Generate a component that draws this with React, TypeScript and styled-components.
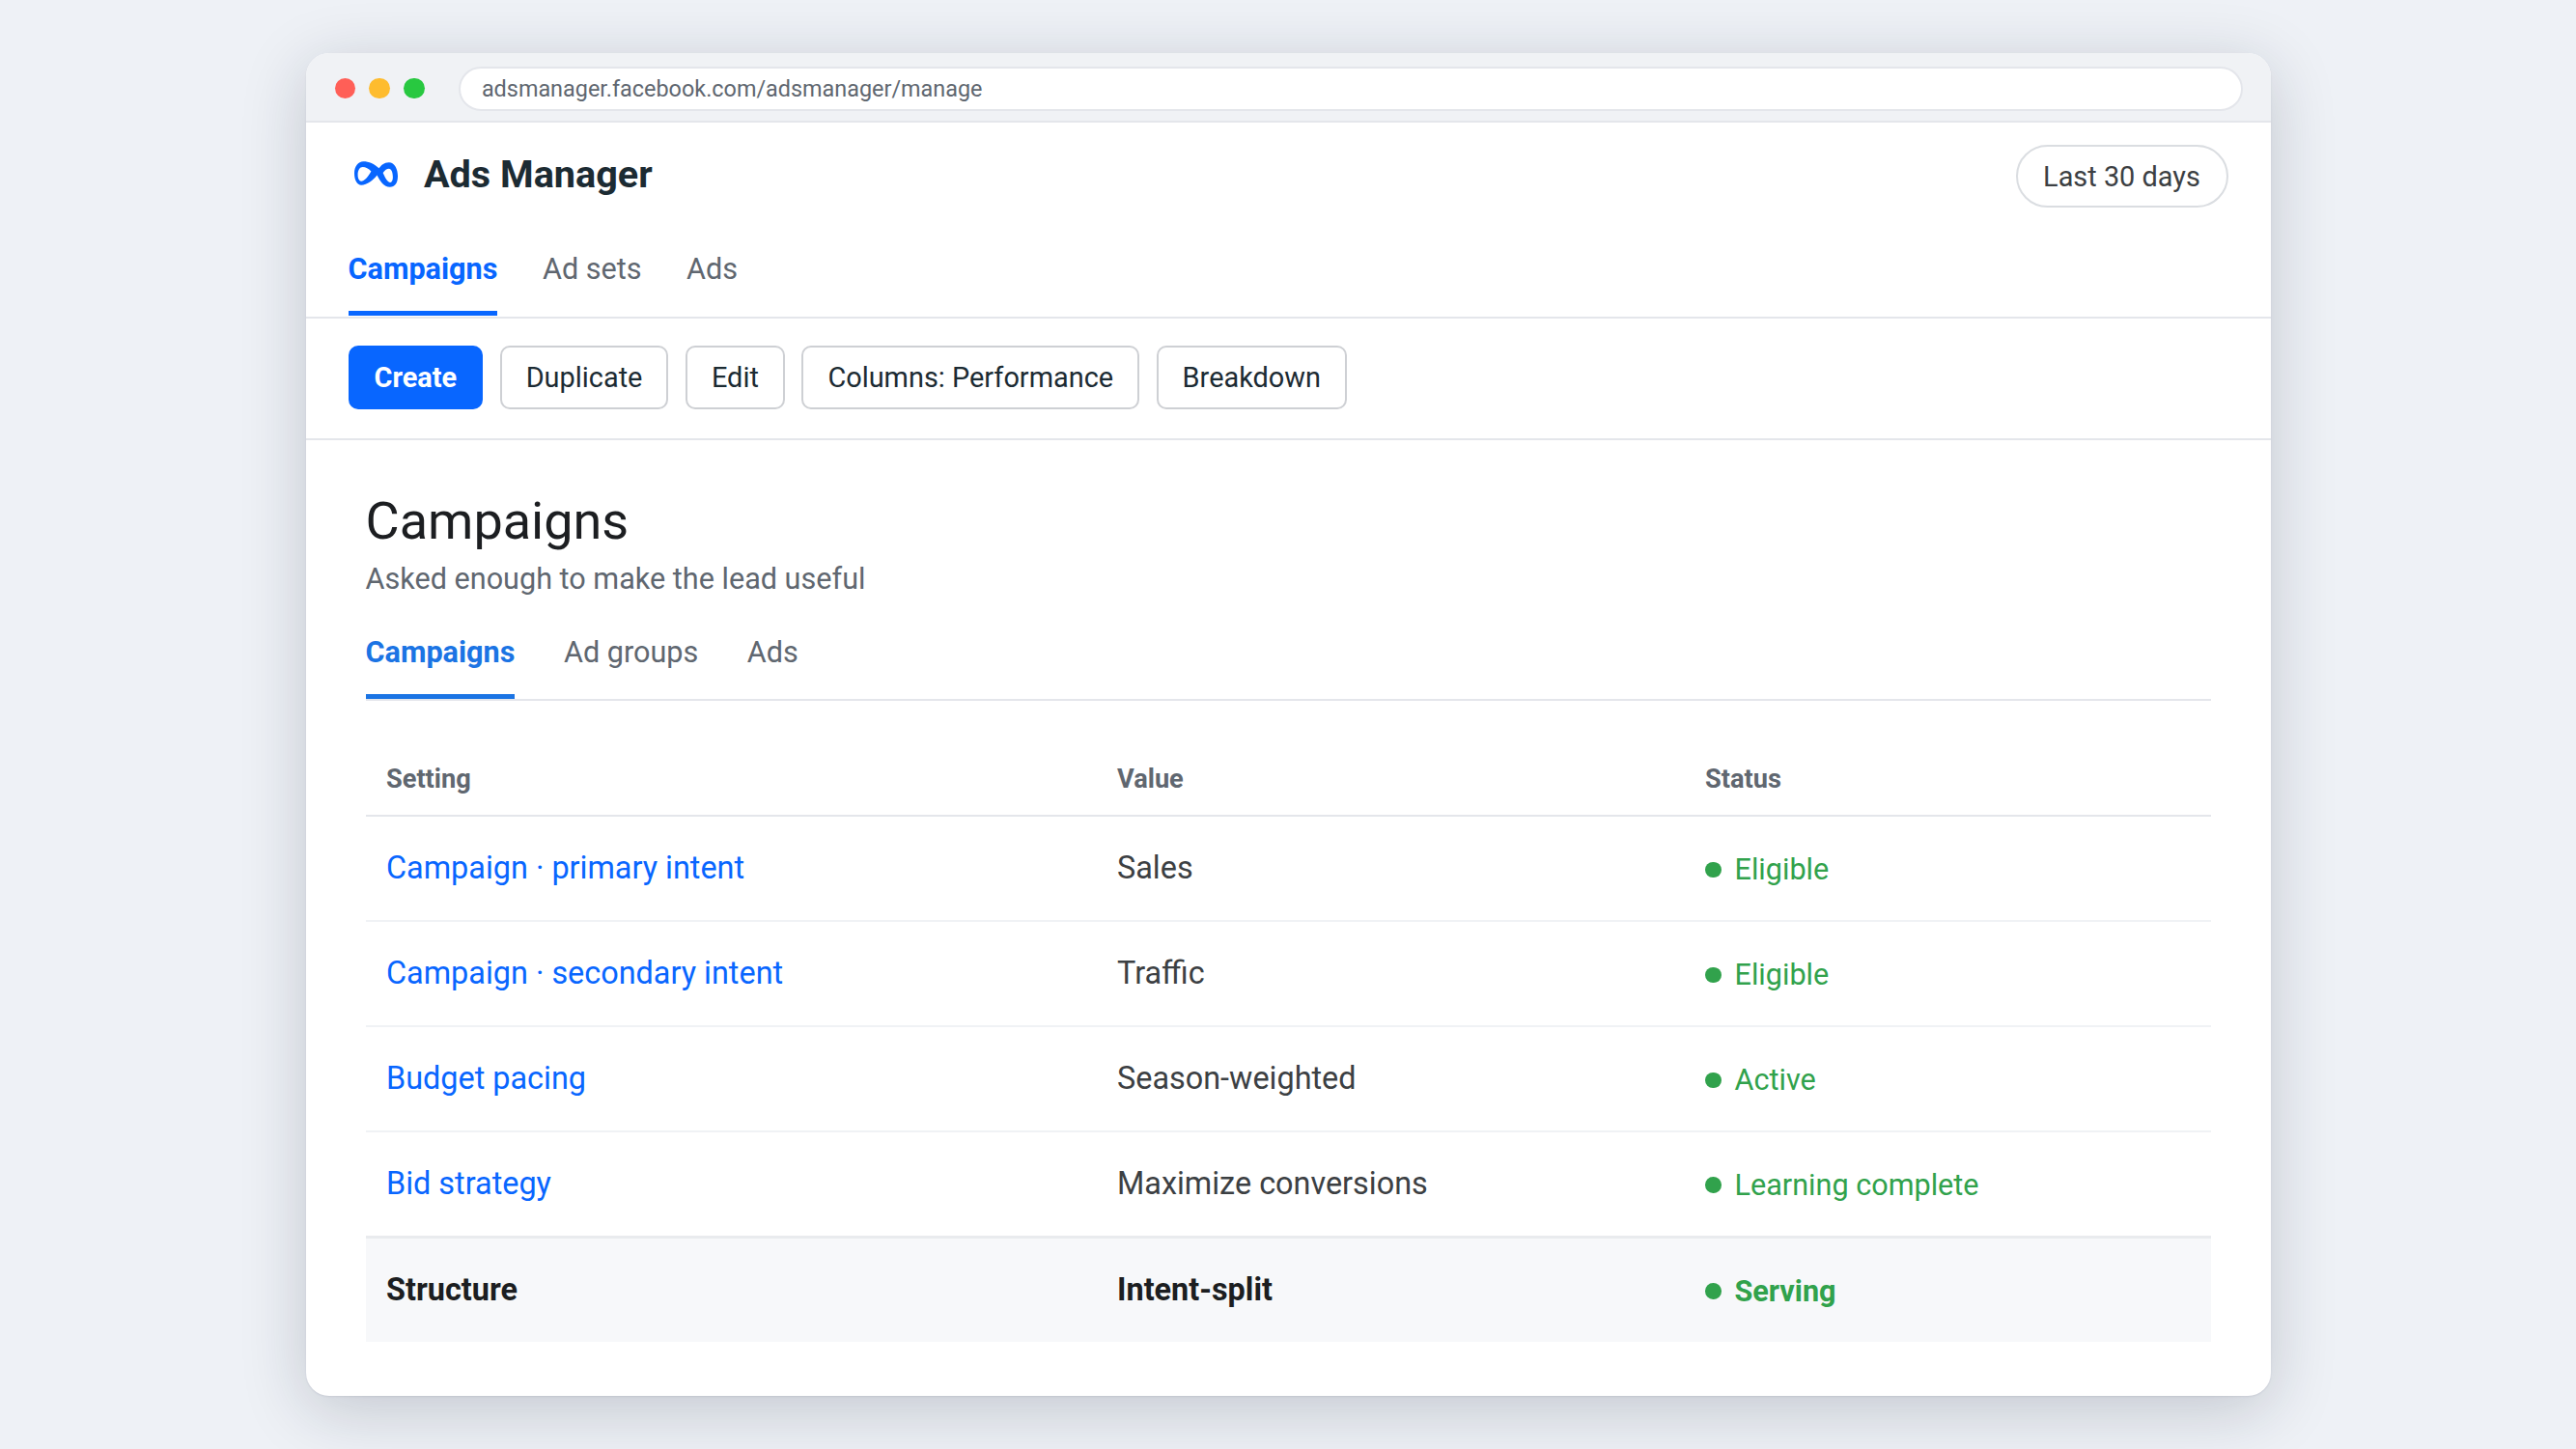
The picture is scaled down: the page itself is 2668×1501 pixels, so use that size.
import React from 'react';
import styled, { createGlobalStyle } from 'styled-components';

const GlobalStyle = createGlobalStyle`
	html, body {
		margin: 0;
		padding: 0;
		background: #eef1f6;
		font-family: Roboto, "Liberation Sans", sans-serif;
	}
	* {
		box-sizing: border-box;
	}
`;

type Row = { setting: string; value: string; status: string };

const rows: Row[] = [
	{ setting: 'Campaign · primary intent', value: 'Sales', status: 'Eligible' },
	{ setting: 'Campaign · secondary intent', value: 'Traffic', status: 'Eligible' },
	{ setting: 'Budget pacing', value: 'Season-weighted', status: 'Active' },
	{ setting: 'Bid strategy', value: 'Maximize conversions', status: 'Learning complete' },
];

function MetaLogo() {
	return (
		<LogoSvg viewBox="0 0 44 26" aria-hidden="true">
			<path
				fillRule="evenodd"
				fill="#0866ff"
				d="M9 0C15 0 20 2 25 7C27 4 30 1 35 1C41 1 44 8 44 15C44 22 41 26 36 26C30 26 26 20 23 14C19 19 13 24 7 24C3 24 0 19 0 12C0 5 4 0 9 0ZM8.5 5.7C5.5 5.7 3.5 9 3.5 13.5C3.5 17.5 5 20 7 20C10 20 13.5 16 17 10C14.5 7.3 11.5 5.7 8.5 5.7ZM35 7.3C33 7.3 30.8 8.8 29 11.5C31 16 33.5 21.3 36.5 21.3C38 21.3 39 19 39 16C39 11 37.5 7.3 35 7.3Z"
			/>
		</LogoSvg>
	);
}

export default function App() {
	return (
		<>
			<GlobalStyle />
			<Stage>
				<BrowserWindow>
					<ChromeBar>
						<Lights>
							<Light $color="#ff5f57" />
							<Light $color="#febc2e" />
							<Light $color="#28c840" />
						</Lights>
						<UrlBar>adsmanager.facebook.com/adsmanager/manage</UrlBar>
					</ChromeBar>

					<TopHeader>
						<Brand>
							<MetaLogo />
							<BrandName>Ads Manager</BrandName>
						</Brand>
						<RangePill>Last 30 days</RangePill>
					</TopHeader>

					<TopTabs>
						<TopTab $active>Campaigns</TopTab>
						<TopTab>Ad sets</TopTab>
						<TopTab>Ads</TopTab>
					</TopTabs>

					<Toolbar>
						<ToolButton $primary>Create</ToolButton>
						<ToolButton>Duplicate</ToolButton>
						<ToolButton>Edit</ToolButton>
						<ToolButton>Columns: Performance</ToolButton>
						<ToolButton>Breakdown</ToolButton>
					</Toolbar>

					<Content>
						<Title>Campaigns</Title>
						<Subtitle>Asked enough to make the lead useful</Subtitle>

						<SubTabs>
							<SubTab $active>Campaigns</SubTab>
							<SubTab>Ad groups</SubTab>
							<SubTab>Ads</SubTab>
						</SubTabs>

						<Table>
							<colgroup>
								<col style={{ width: '757px' }} />
								<col style={{ width: '609px' }} />
								<col />
							</colgroup>
							<thead>
								<tr>
									<HeadCell>Setting</HeadCell>
									<HeadCell>Value</HeadCell>
									<HeadCell>Status</HeadCell>
								</tr>
							</thead>
							<tbody>
								{rows.map(row => (
									<BodyRow key={row.setting}>
										<Cell>
											<SettingLink>{row.setting}</SettingLink>
										</Cell>
										<Cell>{row.value}</Cell>
										<Cell>
											<Status>
												<Dot />
												{row.status}
											</Status>
										</Cell>
									</BodyRow>
								))}
								<TotalRow>
									<Cell>Structure</Cell>
									<Cell>Intent-split</Cell>
									<Cell>
										<Status>
											<Dot />
											Serving
										</Status>
									</Cell>
								</TotalRow>
							</tbody>
						</Table>
					</Content>
				</BrowserWindow>
			</Stage>
		</>
	);
}

const Stage = styled.div`
	min-height: 100vh;
	display: flex;
	align-items: center;
	justify-content: center;
`;

const BrowserWindow = styled.main`
	width: 2035px;
	height: 1391px;
	background: #fff;
	border-radius: 24px;
	overflow: hidden;
	box-shadow: 0 14px 68px rgba(20, 30, 50, 0.2), 0 1px 2px rgba(20, 30, 50, 0.08);
`;

const ChromeBar = styled.div`
	height: 72px;
	display: flex;
	align-items: center;
	gap: 35px;
	padding: 3px 29px 0 30px;
	background: #f0f2f5;
	border-bottom: 2px solid #e4e6eb;
`;

const Lights = styled.div`
	display: flex;
	gap: 14px;
	flex-shrink: 0;
`;

const Light = styled.span<{ $color: string }>`
	width: 21.8px;
	height: 21.8px;
	border-radius: 50%;
	background: ${p => p.$color};
`;

const UrlBar = styled.div`
	flex: 1;
	height: 46px;
	display: flex;
	align-items: center;
	padding: 0 22px;
	background: #fff;
	border: 2px solid #e4e6eb;
	border-radius: 23px;
	font-size: 23.4px;
	color: #606770;
`;

const TopHeader = styled.header`
	display: flex;
	align-items: center;
	justify-content: space-between;
	padding: 23px 44px 0 44px;
`;

const Brand = styled.div`
	display: flex;
	align-items: center;
	gap: 27px;
	padding-left: 6.5px;
	margin-top: -4px;
`;

const LogoSvg = styled.svg`
	width: 45px;
	height: 27px;
`;

const BrandName = styled.span`
	font-size: 39.6px;
	font-weight: 700;
	color: #1c2b33;
`;

const RangePill = styled.div`
	width: 220px;
	height: 65px;
	display: flex;
	align-items: center;
	justify-content: center;
	border: 2px solid #dadde1;
	border-radius: 33px;
	font-size: 28.9px;
	color: #3c4043;
`;

const TopTabs = styled.nav`
	display: flex;
	gap: 46.5px;
	margin-top: 44px;
	padding: 0 44px;
	height: 71px;
	border-bottom: 2px solid #e4e6eb;
`;

const TopTab = styled.a<{ $active?: boolean }>`
	height: 68px;
	padding-top: 2px;
	font-size: 30.6px;
	font-weight: ${p => (p.$active ? 700 : 400)};
	color: ${p => (p.$active ? '#0866ff' : '#606770')};
	border-bottom: 5px solid ${p => (p.$active ? '#0866ff' : 'transparent')};
`;

const Toolbar = styled.div`
	display: flex;
	gap: 17.5px;
	padding: 28px 44px 30px;
	border-bottom: 2px solid #e4e6eb;
`;

const ToolButton = styled.button<{ $primary?: boolean }>`
	height: 66px;
	padding: 0 25px;
	font-family: inherit;
	font-size: 28.9px;
	font-weight: ${p => (p.$primary ? 700 : 400)};
	color: ${p => (p.$primary ? '#fff' : '#1c2b33')};
	background: ${p => (p.$primary ? '#0866ff' : '#fff')};
	border: 2px solid ${p => (p.$primary ? '#0866ff' : '#ced0d4')};
	border-radius: 10px;
`;

const Content = styled.section`
	padding: 52px 62px 54px 62px;
`;

const Title = styled.h1`
	margin: 0;
	font-size: 54px;
	font-weight: 400;
	line-height: 64px;
	color: #1c1e21;
`;

const Subtitle = styled.p`
	margin: 10px 0 0;
	font-size: 30.6px;
	line-height: 36px;
	color: #606770;
`;

const SubTabs = styled.nav`
	display: flex;
	gap: 50.5px;
	margin-top: 40px;
	height: 68px;
	border-bottom: 2px solid #e4e6eb;
`;

const SubTab = styled.a<{ $active?: boolean }>`
	height: 66px;
	font-size: 30.6px;
	font-weight: ${p => (p.$active ? 700 : 400)};
	color: ${p => (p.$active ? '#1b74e4' : '#606770')};
	border-bottom: 5px solid ${p => (p.$active ? '#1b74e4' : 'transparent')};
`;

const Table = styled.table`
	width: 100%;
	margin-top: 43px;
	border-collapse: collapse;
	table-layout: fixed;
`;

const HeadCell = styled.th`
	height: 76px;
	padding: 0 21.5px;
	text-align: left;
	font-size: 27.2px;
	font-weight: 700;
	color: #606770;
	border-bottom: 2px solid #e4e6eb;
`;

const Cell = styled.td`
	padding: 0 21.5px 1.5px;
	font-size: 32.4px;
`;

const BodyRow = styled.tr`
	height: 109px;
	color: #3c4043;
	border-bottom: 2px solid #f0f2f5;
	&:nth-last-child(2) {
		border-bottom: 3px solid #e9ebee;
	}
`;

const TotalRow = styled.tr`
	height: 109px;
	background: #f7f8fa;
	color: #1c1e21;
	font-weight: 700;
`;

const SettingLink = styled.a`
	color: #0866ff;
`;

const Status = styled.span`
	display: inline-flex;
	align-items: center;
	gap: 14px;
	font-size: 30.6px;
	color: #31a24c;
`;

const Dot = styled.span`
	width: 16.5px;
	height: 16.5px;
	border-radius: 50%;
	background: #31a24c;
`;
